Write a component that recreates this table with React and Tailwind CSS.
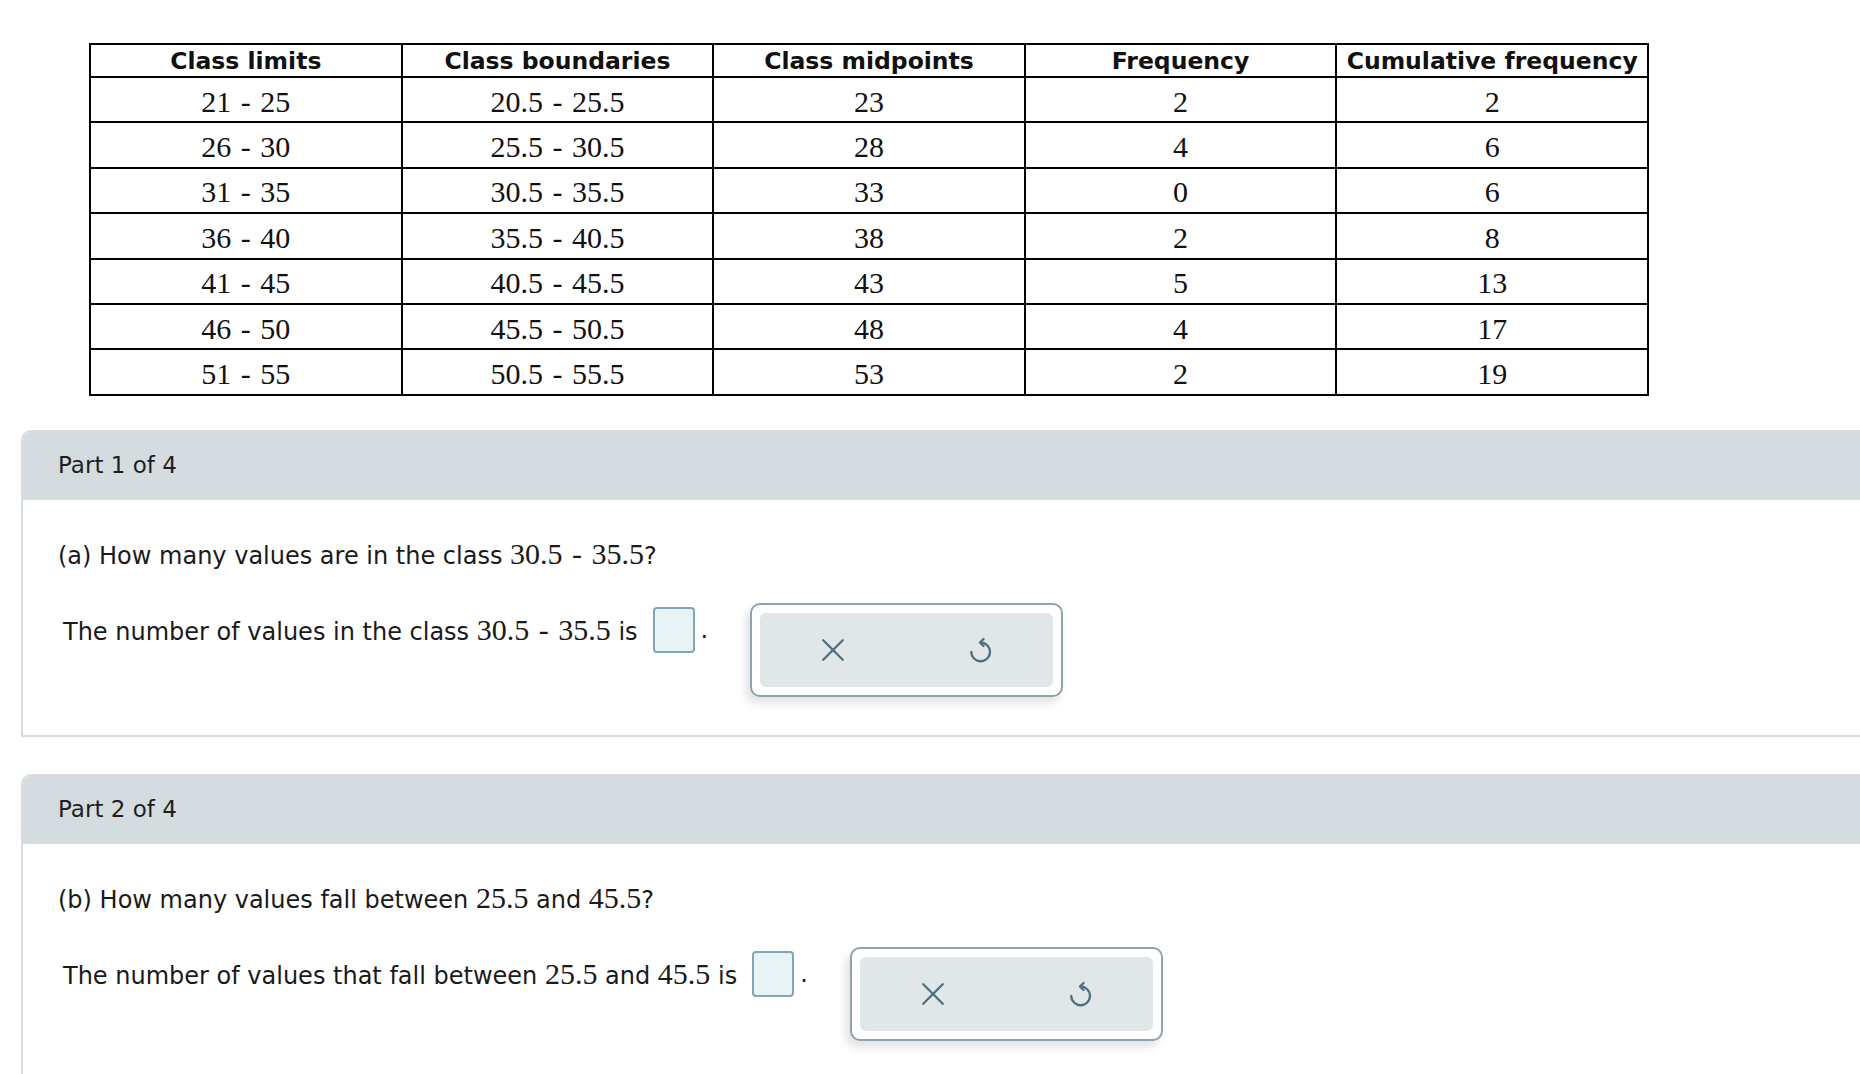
import React from 'react';

const rows = [
  ['21 - 25', '20.5 - 25.5', '23', '2', '2'],
  ['26 - 30', '25.5 - 30.5', '28', '4', '6'],
  ['31 - 35', '30.5 - 35.5', '33', '0', '6'],
  ['36 - 40', '35.5 - 40.5', '38', '2', '8'],
  ['41 - 45', '40.5 - 45.5', '43', '5', '13'],
  ['46 - 50', '45.5 - 50.5', '48', '4', '17'],
  ['51 - 55', '50.5 - 55.5', '53', '2', '19'],
];

const headers = ['Class limits', 'Class boundaries', 'Class midpoints', 'Frequency', 'Cumulative frequency'];

const Num = ({ children }) => (
  <span className="font-['Liberation_Serif',serif] text-[30px] [word-spacing:2px]">{children}</span>
);

const XIcon = () => (
  <svg width="26" height="26" viewBox="0 0 24 24" fill="none" stroke="#4d717e" strokeWidth="2.2" strokeLinecap="round">
    <path d="M3 3L21 21" />
    <path d="M21 3L3 21" />
  </svg>
);

const UndoIcon = () => (
  <svg width="30" height="30" viewBox="0 0 24 24" fill="none" stroke="#4d717e" strokeWidth="1.9" strokeLinecap="round" strokeLinejoin="round">
    <path d="M5 13.5A7.5 7.5 0 1 0 12.5 6" />
    <path d="M14.8 3.2L12 6L14.8 8.8" />
  </svg>
);

const AnswerTools = () => (
  <div className="w-[313px] h-[94px] border-2 border-[#8fa3ac] rounded-[10px] bg-white p-[8px] shadow-[-4px_6px_10px_rgba(0,0,0,0.12)]">
    <div className="flex h-full bg-[#e1e6e9] rounded-[6px]">
      <button className="flex-1 flex items-center justify-center">
        <XIcon />
      </button>
      <button className="flex-1 flex items-center justify-center">
        <UndoIcon />
      </button>
    </div>
  </div>
);

const AnswerBox = () => (
  <span className="inline-block w-[42px] h-[46px] ml-[15px] border-2 border-[#7ea8b5] bg-[#e8f3f5] rounded-[4px]" />
);

const Part = ({ label, question, answer, className }) => (
  <div className={`ml-[21px] w-[1900px] border-2 border-[#d5dcdf] rounded-tl-[10px] ${className}`}>
    <div className="h-[68px] bg-[#d5dcdf] rounded-tl-[8px] flex items-center pl-[35px] text-[23px] text-[#1f1f1f]">
      {label}
    </div>
    <div className="pl-[35px] pt-[37px] pb-[38px] text-[24px] text-[#1a1a1a]">
      <div className="h-[34px] flex items-center">{question}</div>
      <div className="flex items-start mt-[32px] pl-[5px]">
        <div className="flex items-center h-[46px] mt-[4px]">
          {answer}
          <AnswerBox />
          <span className="ml-[6px]">.</span>
        </div>
        <div className="ml-[42px]">
          <AnswerTools />
        </div>
      </div>
    </div>
  </div>
);

export default function App() {
  return (
    <div className="w-full h-[1074px] overflow-hidden bg-white font-['DejaVu_Sans',sans-serif]">
      <div className="pt-[43px] pl-[89px]">
        <table className="table-fixed border-collapse border-2 border-black w-[1560px]">
          <thead>
            <tr className="h-[33px]">
              {headers.map((h) => (
                <th key={h} className="border-2 border-black text-[23.5px] font-bold text-[#111] leading-[28px] p-0">
                  {h}
                </th>
              ))}
            </tr>
          </thead>
          <tbody>
            {rows.map((r, i) => (
              <tr key={i} className="h-[45.4px]">
                {r.map((c, j) => (
                  <td
                    key={j}
                    className="border-2 border-black text-center p-0 pt-[4px] text-[#111] font-['Liberation_Serif',serif] text-[30px] leading-[30px] [word-spacing:2px]"
                  >
                    {c}
                  </td>
                ))}
              </tr>
            ))}
          </tbody>
        </table>
      </div>

      <Part
        className="mt-[34px]"
        label="Part 1 of 4"
        question={
          <span>
            (a) How many values are in the class <Num>30.5 - 35.5</Num>?
          </span>
        }
        answer={
          <span>
            The number of values in the class <Num>30.5 - 35.5</Num> is
          </span>
        }
      />

      <Part
        className="mt-[37px]"
        label="Part 2 of 4"
        question={
          <span>
            (b) How many values fall between <Num>25.5</Num> and <Num>45.5</Num>?
          </span>
        }
        answer={
          <span>
            The number of values that fall between <Num>25.5</Num> and <Num>45.5</Num> is
          </span>
        }
      />
    </div>
  );
}
